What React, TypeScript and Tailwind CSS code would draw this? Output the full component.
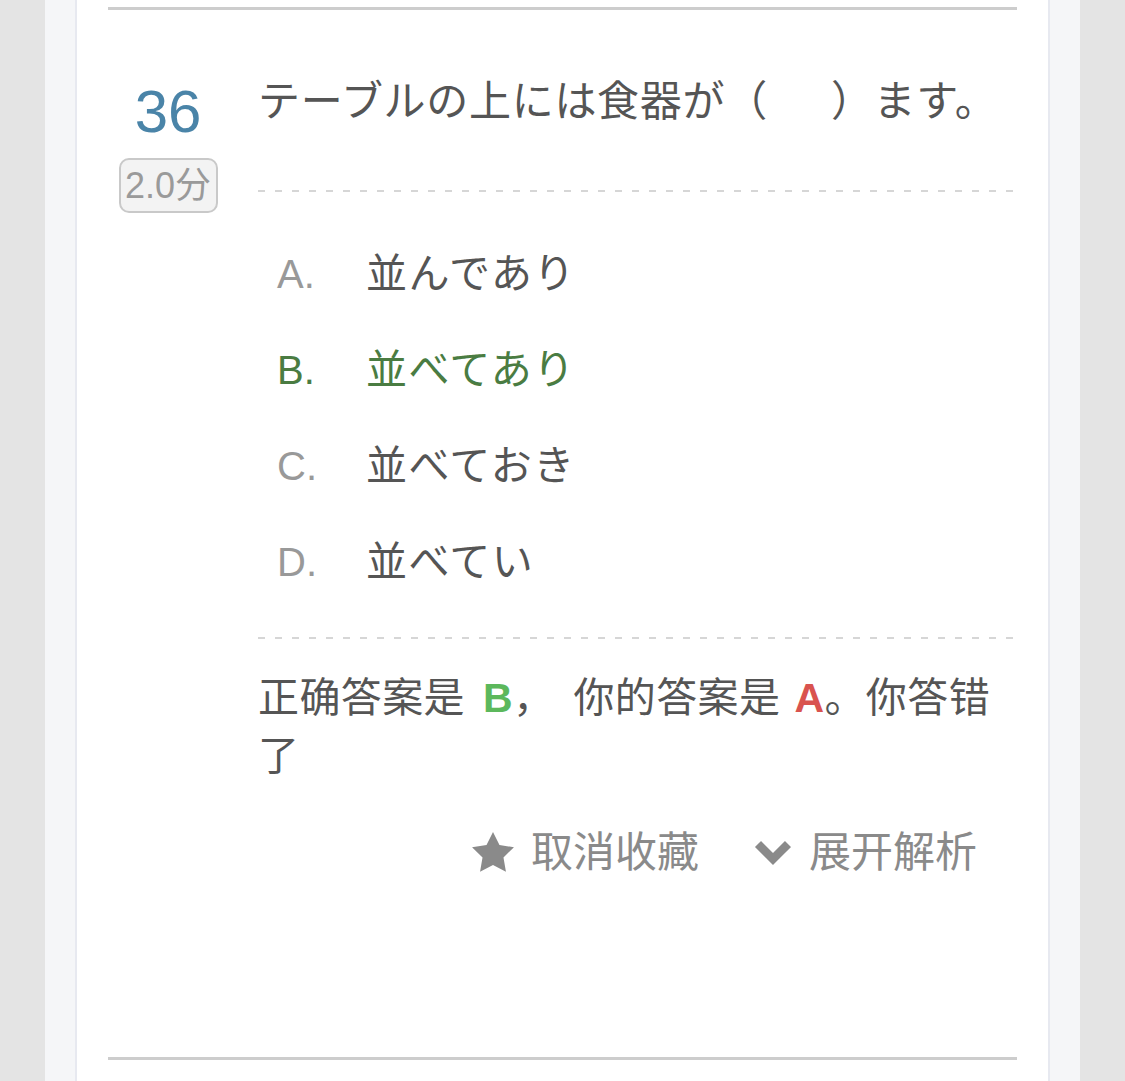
const options = [
  { key: "A", text: "並んであり", correct: false },
  { key: "B", text: "並べてあり", correct: true },
  { key: "C", text: "並べておき", correct: false },
  { key: "D", text: "並べてい", correct: false },
];

function Dashed({ className = "" }: { className?: string }) {
  return (
    <div
      className={`h-[2px] bg-[repeating-linear-gradient(to_right,#d6d6d6_0_7px,transparent_7px_17px)] ${className}`}
    />
  );
}

export default function App() {
  return (
    <div className="min-h-screen bg-[#e4e4e4] px-[45px] font-['Liberation_Sans','Noto_Sans_CJK_SC',sans-serif]">
      <div className="min-h-screen bg-[#f5f6f8] px-[30px]">
        <div className="min-h-screen bg-white border-x-2 border-[#e7e9f0] px-[31px] pt-[7px] pb-[21px]">
          <div className="h-[3px] bg-[#cdcdcd]" />

          {/* 题目 */}
          <div className="mt-[58px] flex gap-[30px]">
            <div className="w-[120px] shrink-0 flex flex-col items-center pt-[14px]">
              <div className="text-[60px] leading-none text-[#4a84a8]">36</div>
              <div className="mt-[16px] w-[99px] h-[55px] flex items-center justify-center rounded-[10px] border-2 border-[#c9c9c9] bg-[#f3f3f3] text-[36px] leading-none text-[#9a9a9a]">
                2.0分
              </div>
            </div>

            <div className="flex-1">
              <p className="text-[42px] leading-[60px] tracking-[0.7px] text-[#555] font-['Noto_Sans_CJK_JP',sans-serif]">
                テーブルの上には食器が（<span className="inline-block w-[63px]" />）ます。
              </p>

              <Dashed className="mt-[62px]" />

              <div className="mt-[30px]">
                {options.map((o) => (
                  <div
                    key={o.key}
                    className={`h-[96px] leading-[96px] pl-[19px] text-[41px] whitespace-nowrap ${
                      o.correct ? "text-[#4a7c42]" : "text-[#555]"
                    }`}
                  >
                    <span
                      className={`inline-block w-[89px] text-[40px] font-['Liberation_Sans',sans-serif] ${
                        o.correct ? "text-[#4a7c42]" : "text-[#999]"
                      }`}
                    >
                      {o.key}.
                    </span>
                    <span className="tracking-[1.5px] font-['Noto_Sans_CJK_JP',sans-serif]">{o.text}</span>
                  </div>
                ))}
              </div>

              <Dashed className="mt-[31px]" />

              {/* 答案 */}
              <p className="mt-[30px] text-[41px] leading-[58px] tracking-[0.4px] text-[#555]">
                <span>正确答案是</span>
                <b className="ml-[18px] font-bold text-[#5cb85c]">B</b>
                <span>，</span>
                <span className="ml-[19px]">你的答案是</span>
                <b className="ml-[14px] font-bold text-[#d9534f]">A</b>
                <span>。你答错</span>
                <span>了</span>
              </p>

              <div className="mt-[37px] h-[60px] flex items-center justify-end gap-[55px] pr-[40px] text-[42px] text-[#8a8a8a]">
                <button className="flex items-center gap-[17px] cursor-pointer">
                  <svg width="42" height="40" viewBox="2 2 20 19.1" className="fill-[#8a8a8a]">
                    <polygon points="12,2 15.09,8.26 22,9.27 17,14.14 18.18,21.02 12,17.77 5.82,21.02 7,14.14 2,9.27 8.91,8.26" />
                  </svg>
                  <span>取消收藏</span>
                </button>
                <button className="flex items-center gap-[17px] cursor-pointer">
                  <svg width="38" height="27" viewBox="0 0 38 27">
                    <polyline
                      points="4,5 19,20 34,5"
                      fill="none"
                      stroke="#8a8a8a"
                      strokeWidth="8.5"
                      strokeLinejoin="miter"
                    />
                  </svg>
                  <span>展开解析</span>
                </button>
              </div>
            </div>
          </div>

          <div className="mt-[175px] h-[3px] bg-[#cdcdcd]" />
        </div>
      </div>
    </div>
  );
}
